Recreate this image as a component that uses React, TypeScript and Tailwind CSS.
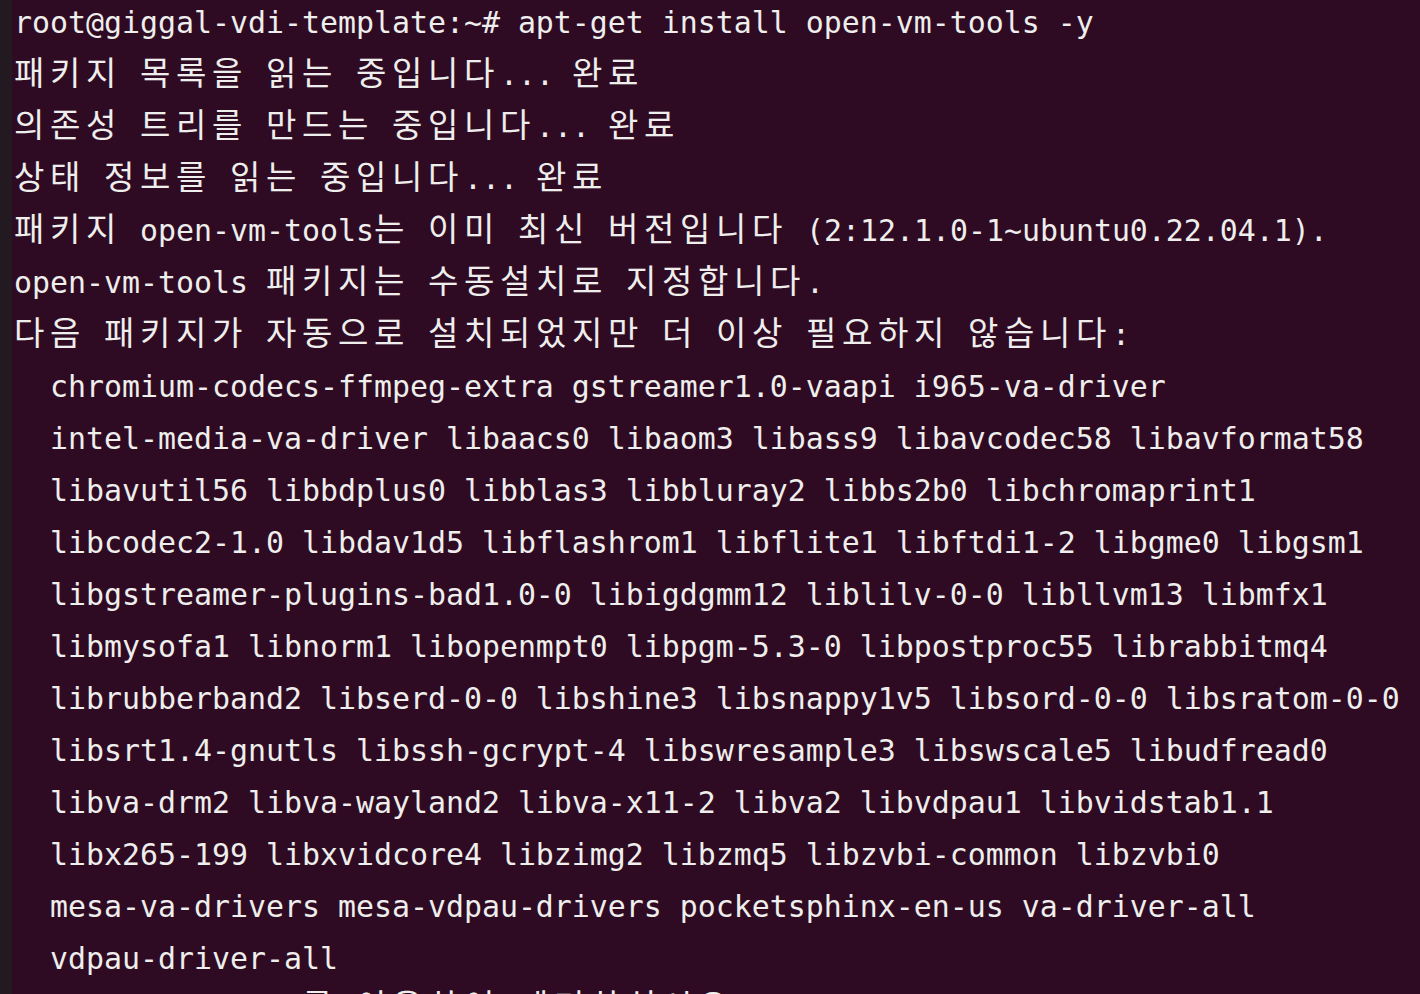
import React from "react"

const lines = [
    "root@giggal-vdi-template:~# apt-get install open-vm-tools -y",
    "패키지 목록을 읽는 중입니다... 완료",
    "의존성 트리를 만드는 중입니다... 완료",
    "상태 정보를 읽는 중입니다... 완료",
    "패키지 open-vm-tools는 이미 최신 버전입니다 (2:12.1.0-1~ubuntu0.22.04.1).",
    "open-vm-tools 패키지는 수동설치로 지정합니다.",
    "다음 패키지가 자동으로 설치되었지만 더 이상 필요하지 않습니다:",
    "  chromium-codecs-ffmpeg-extra gstreamer1.0-vaapi i965-va-driver",
    "  intel-media-va-driver libaacs0 libaom3 libass9 libavcodec58 libavformat58",
    "  libavutil56 libbdplus0 libblas3 libbluray2 libbs2b0 libchromaprint1",
    "  libcodec2-1.0 libdav1d5 libflashrom1 libflite1 libftdi1-2 libgme0 libgsm1",
    "  libgstreamer-plugins-bad1.0-0 libigdgmm12 liblilv-0-0 libllvm13 libmfx1",
    "  libmysofa1 libnorm1 libopenmpt0 libpgm-5.3-0 libpostproc55 librabbitmq4",
    "  librubberband2 libserd-0-0 libshine3 libsnappy1v5 libsord-0-0 libsratom-0-0",
    "  libsrt1.4-gnutls libssh-gcrypt-4 libswresample3 libswscale5 libudfread0",
    "  libva-drm2 libva-wayland2 libva-x11-2 libva2 libvdpau1 libvidstab1.1",
    "  libx265-199 libxvidcore4 libzimg2 libzmq5 libzvbi-common libzvbi0",
    "  mesa-va-drivers mesa-vdpau-drivers pocketsphinx-en-us va-driver-all",
    "  vdpau-driver-all",
]

// last line is only half on screen
const tail = "                를 이용하여 제거하십시오."

// split a line into runs of narrow (ascii) and wide (hangul) cells
const splitRuns = (text: string) => {
    const runs: { wide: boolean; text: string }[] = []
    for (const ch of text) {
        const wide = ch.charCodeAt(0) >= 0x1100
        const last = runs[runs.length - 1]
        if (last && last.wide === wide) last.text += ch
        else runs.push({ wide, text: ch })
    }
    return runs
}

const Line = ({ text, className = "" }: { text: string; className?: string }) => {
    return (
        <div className={"h-[52px] whitespace-pre " + className}>
            {splitRuns(text).map((run, i) =>
                run.wide ? (
                    Array.from(run.text).map((ch, j) => (
                        <span key={i + "-" + j} className="inline-block w-[36px] font-['Noto_Sans_CJK_KR',sans-serif] text-[33px] leading-[0]">
                            {ch}
                        </span>
                    ))
                ) : (
                    <span key={i}>{run.text}</span>
                )
            )}
        </div>
    )
}

export default function App() {
    return (
        <div className="flex h-[994px] w-[1420px] overflow-hidden bg-[#2e0b23]">
            <div className="w-[12px] shrink-0 bg-[#221a20]" />
            <div className="flex-1 pl-[2px] text-[#eeeeec] font-['DejaVu_Sans_Mono',monospace] text-[29.9px] leading-[52px]">
                <div className="-mt-[3px]">
                    {lines.map((l, i) => (
                        <Line key={i} text={l} />
                    ))}
                    <Line text={tail} className="-mt-[3px]" />
                </div>
            </div>
        </div>
    )
}
